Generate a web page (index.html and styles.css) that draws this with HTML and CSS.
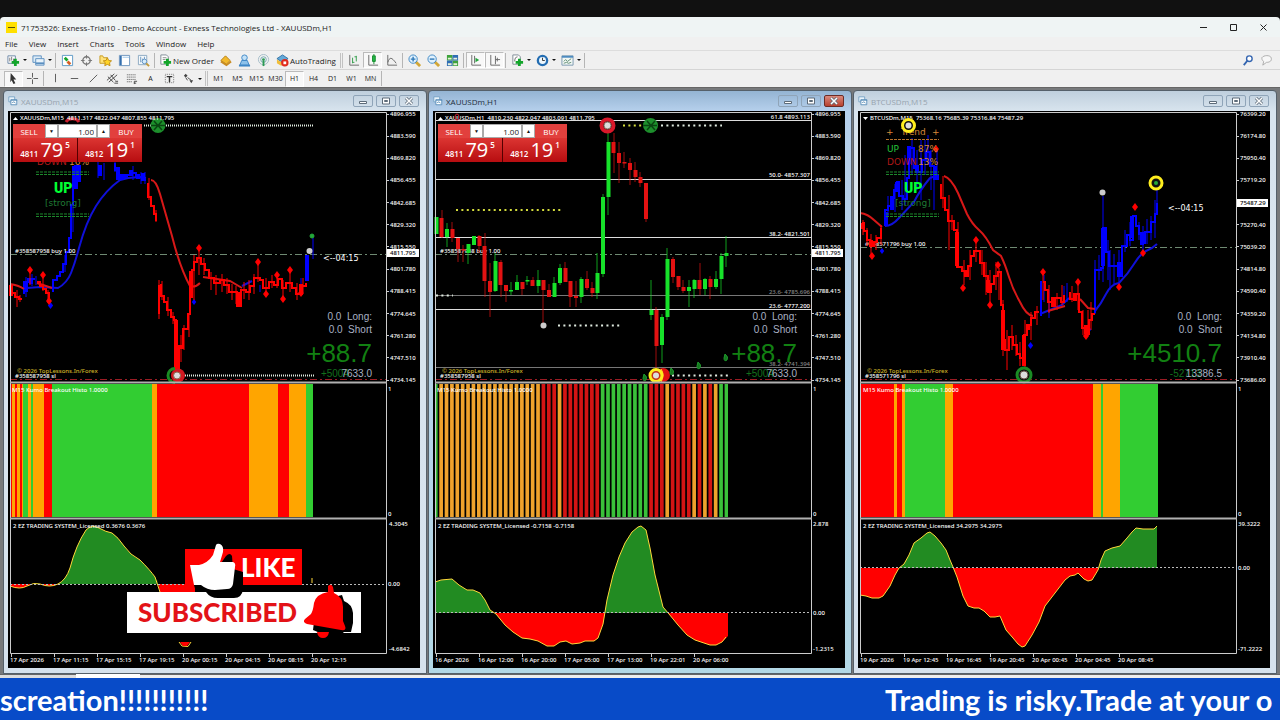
FILE: index.html
```html
<!DOCTYPE html>
<html lang="en">
<head>
    <meta charset="UTF-8">
    <meta name="viewport" content="width=device-width, initial-scale=1.0">
    <title>71753526: Exness-Trial10 - Demo Account</title>
    <link rel="stylesheet" href="styles.css">
</head>
<body>
    <svg class="defs" width="0" height="0" aria-hidden="true">
        <symbol id="i-win" viewBox="0 0 12 12"><path d="M1 1h7v6H1z" fill="#e9f4fb" stroke="#6d9cc0"/><path d="M3.500 4.500h7v6h-7z" fill="#fff" stroke="#4d86b4"/><path d="M3 5h8M5 8l2-1 2 1.500" stroke="#4d86b4" fill="none"/></symbol>
        <symbol id="i-min" viewBox="0 0 10 8"><path d="M1.500 4.500h7v2h-7z" fill="#fff" stroke="#5d6b79"/></symbol>
        <symbol id="i-max" viewBox="0 0 10 8"><path d="M1.500 1h7v6h-7z" fill="#fff" stroke="#5d6b79"/><path d="M3.500 3.500h3v1h-3z" fill="none" stroke="#5d6b79"/></symbol>
        <symbol id="i-x" viewBox="0 0 10 8"><path d="M2 1l6 6M8 1L2 7" stroke="#5d6b79" stroke-width="3"/><path d="M2 1l6 6M8 1L2 7" stroke="#fff" stroke-width="1.500"/></symbol>
        <symbol id="dia" viewBox="-4 -4 8 8"><path d="M0-4L3 0 0 4-3 0z"/></symbol>
    </svg>

    <div class="app">
        <header class="titlebar">
            <svg class="logo" viewBox="0 0 11 11"><path d="M0 0h11v11H0z" fill="#ffe000"/><path d="M2 5.500h7" stroke="#55500a"/></svg>
            <h1>71753526: Exness-Trial10 - Demo Account - Exness Technologies Ltd - XAUUSDm,H1</h1>
            <div class="sys">
                <button aria-label="Minimize"><svg viewBox="0 0 9 9"><path d="M1 4.500h7"/></svg></button>
                <button aria-label="Restore"><svg viewBox="0 0 9 9"><path d="M1.500 1.500h6v6h-6z"/></svg></button>
                <button aria-label="Close"><svg viewBox="0 0 9 9"><path d="M1.500 1.500l6 6M7.500 1.500l-6 6"/></svg></button>
            </div>
        </header>
        <nav class="menu">
            <a href="#">File</a><a href="#">View</a><a href="#">Insert</a><a href="#">Charts</a><a href="#">Tools</a><a href="#">Window</a><a href="#">Help</a>
        </nav>

        <div class="toolbar main-tools">
            <button class="drop" aria-label="New chart"><svg viewBox="0 0 14 14"><path d="M1 2h8v8H1z" fill="#fff" stroke="#6b86a5"/><path d="M3 8V4M5 7V3M7 8V5" stroke="#777"/><path d="M9 5v8M5 9h8" stroke="#13a52b" stroke-width="3"/></svg><i></i></button>
            <button class="drop" aria-label="Profiles"><svg viewBox="0 0 14 14"><path d="M1 2h9v7H1z" fill="#dcebf7" stroke="#5b8fc0"/><path d="M4 5h9v7H4z" fill="#e8f3fb" stroke="#5b8fc0"/><path d="M4 10h9" stroke="#5b8fc0" stroke-width="2"/></svg><i></i></button>
            <span class="sep"></span>
            <button aria-label="Market watch"><svg viewBox="0 0 14 14"><path d="M1.500 1.500h11v11h-11z" fill="#fff" stroke="#5b98c6"/><path d="M4 4l3 3" stroke="#13a52b" stroke-width="3"/><path d="M7 8l3 3" stroke="#d65f24" stroke-width="3"/></svg></button>
            <button aria-label="Data window"><svg viewBox="0 0 14 14"><circle cx="7" cy="7" r="4" fill="none" stroke="#777" stroke-width="1.500"/><path d="M7 1v4M7 9v4M1 7h4M9 7h4" stroke="#777"/></svg></button>
            <button aria-label="Navigator"><svg viewBox="0 0 14 14"><path d="M1 2h3l1 2h4v6H1z" fill="#ffe27a" stroke="#c79b1f"/><path d="M9 4l1.500 3 3 .4-2.200 2 .6 3.200L9 11.200 6.200 12.600l.6-3.200-2.200-2 3-.4z" fill="#ffd427" stroke="#c08d12"/></svg></button>
            <button aria-label="Terminal"><svg viewBox="0 0 14 14"><path d="M1.500 1.500h11v11h-11z" fill="#fff" stroke="#6b93bd"/><path d="M3 2v10" stroke="#356fae" stroke-width="2"/><path d="M5 3.500h7" stroke="#9bc4e8"/></svg></button>
            <button aria-label="Strategy tester"><svg viewBox="0 0 14 14"><path d="M1.500 1.500h9v10h-9z" fill="#f4f8fb" stroke="#8aa7c0"/><path d="M4 3v6M6 5v4M8 3v3" stroke="#6c97c0"/><circle cx="8" cy="8" r="2.500" fill="#d6ecfb" stroke="#5b8fc0"/><path d="M10 10l3 3" stroke="#c39b3a" stroke-width="2"/></svg></button>
            <span class="sep"></span>
            <button class="label"><svg viewBox="0 0 14 14"><path d="M2 1h6l2 2v8H2z" fill="#fff" stroke="#7d8994"/><path d="M4 4h4M4 6h3" stroke="#888"/><path d="M9 5v8M5 9h8" stroke="#13a52b" stroke-width="3"/></svg>New Order</button>
            <button aria-label="MetaEditor"><svg viewBox="0 0 14 14"><path d="M2 7l5-5 5 5-4 4z" fill="#f2b92c" stroke="#b3801a"/><path d="M2 8l6 4 5-4" fill="none" stroke="#c98c22" stroke-width="2"/></svg></button>
            <button aria-label="Community"><svg viewBox="0 0 14 14"><circle cx="7" cy="4" r="3" fill="#c3e1f7" stroke="#3c86c6"/><path d="M2 12l2-5h6l2 5z" fill="#8cc1ea" stroke="#3c86c6"/><path d="M1 12.500h12" stroke="#3c86c6" stroke-width="2"/></svg></button>
            <button aria-label="Signals"><svg viewBox="0 0 14 14"><circle cx="7" cy="6" r="5.500" fill="none" stroke="#a4bcc8"/><circle cx="7" cy="6" r="3" fill="none" stroke="#6fa7b0"/><circle cx="7" cy="6" r="1.500" fill="#2b9a53"/><path d="M7 7v6" stroke="#2b9a53" stroke-width="2"/></svg></button>
            <button class="label auto"><svg viewBox="0 0 14 14"><path d="M1 5l6-4 6 4-6 4z" fill="#64a9d8" stroke="#2f6fa5"/><path d="M1 6v4l5 3V9z" fill="#f0bd38"/><circle cx="9.500" cy="9.500" r="4" fill="#e02a1b"/><path d="M8 8h3v3H8z" fill="#fff"/></svg>AutoTrading</button>
            <span class="sep grip"></span>
            <button aria-label="Bar chart"><svg viewBox="0 0 14 14"><path d="M3 1v11h10" fill="none" stroke="#666"/><path d="M6 4v6M6 9h2M10 2v6M8 3h2" stroke="#2d9c46"/></svg></button>
            <button class="on" aria-label="Candlesticks"><svg viewBox="0 0 14 14"><path d="M3 1v11h10" fill="none" stroke="#666"/><path d="M8.500 0v11" stroke="#168c2e"/><path d="M7 2h3v6H7z" fill="#24b445" stroke="#168c2e"/></svg></button>
            <button aria-label="Line chart"><svg viewBox="0 0 14 14"><path d="M3 1v11h10" fill="none" stroke="#666"/><path d="M3 9c2-6 4-6 9 1" fill="none" stroke="#666"/></svg></button>
            <span class="sep"></span>
            <button aria-label="Zoom in"><svg viewBox="0 0 14 14"><path d="M8 8l5 5" stroke="#d2a737" stroke-width="3"/><circle cx="5.500" cy="5.500" r="4.500" fill="#dff1fd" stroke="#3d86c4"/><path d="M3 5.500h5M5.500 3v5" stroke="#2e78b8" stroke-width="1.500"/></svg></button>
            <button aria-label="Zoom out"><svg viewBox="0 0 14 14"><path d="M8 8l5 5" stroke="#d2a737" stroke-width="3"/><circle cx="5.500" cy="5.500" r="4.500" fill="#dff1fd" stroke="#3d86c4"/><path d="M3 5.500h5" stroke="#2e78b8" stroke-width="1.500"/></svg></button>
            <button aria-label="Tile windows"><svg viewBox="0 0 14 14"><path d="M1 1h6v6H1zM7 7h6v6H7z" fill="#3ea33c"/><path d="M7 1h6v6H7zM1 7h6v6H1z" fill="#2f6db4"/><path d="M2 4h4v2H2zM8 4h4v2H8zM2 10h4v2H2zM8 10h4v2H8z" fill="#e8f1da"/></svg></button>
            <span class="sep"></span>
            <button class="on" aria-label="Auto scroll"><svg viewBox="0 0 14 14"><path d="M3 1v11h10M6 2v8" fill="none" stroke="#666"/><path d="M7 4l4 2.500-4 2.500z" fill="#23a63b"/></svg></button>
            <button class="on" aria-label="Chart shift"><svg viewBox="0 0 14 14"><path d="M3 1v11h10M8 2v9" fill="none" stroke="#666"/><path d="M8 6h5M10 4v4" stroke="#666"/></svg></button>
            <span class="sep"></span>
            <button class="drop" aria-label="Indicators"><svg viewBox="0 0 14 14"><path d="M2 1h6l2 2v8H2z" fill="#fff" stroke="#7d8994"/><path d="M4 8c0-3 1-5 3-5" fill="none" stroke="#666"/><path d="M9 5v8M5 9h8" stroke="#13a52b" stroke-width="3"/></svg><i></i></button>
            <button class="drop" aria-label="Periods"><svg viewBox="0 0 14 14"><circle cx="7" cy="7" r="5" fill="#eef7fd" stroke="#236db2" stroke-width="2.500"/><path d="M7 4v3h2.500" fill="none" stroke="#333"/></svg><i></i></button>
            <button class="drop" aria-label="Templates"><svg viewBox="0 0 14 14"><path d="M1 2h12v10H1z" fill="#f2f7f4" stroke="#7796ae"/><path d="M1 3h12" stroke="#4d8bc0" stroke-width="2"/><path d="M3 8l2-2 2 2 4-3M3 10l3-1 2 1 3-1" fill="none" stroke="#5b8a70"/></svg><i></i></button>
            <span class="sep"></span>
            <button class="push" aria-label="Search"><svg viewBox="0 0 14 14"><circle cx="9" cy="5" r="3" fill="#fff" stroke="#3465b0" stroke-width="1.500"/><path d="M7 7l-4 5" stroke="#3465b0" stroke-width="2"/></svg></button>
            <button aria-label="Messages"><svg viewBox="0 0 14 14"><path d="M2 4c2-3 9-3 10 0s-1 5-5 5l-4 3 1-4c-2-1-2-3-2-4z" fill="#f7f7f7" stroke="#aaa"/></svg></button>
        </div>

        <div class="toolbar line-tools">
            <button class="on" aria-label="Cursor"><svg viewBox="0 0 14 14"><path d="M4 1l6 7H7l2 4-2 1-2-4-1.500 2z" fill="#333"/></svg></button>
            <button aria-label="Crosshair"><svg viewBox="0 0 14 14"><path d="M7 1v5M7 8v5M1 7h5M8 7h5" stroke="#555"/></svg></button>
            <span class="sep"></span>
            <button aria-label="Vertical line"><svg viewBox="0 0 14 14"><path d="M7 2v9" stroke="#555"/></svg></button>
            <button aria-label="Horizontal line"><svg viewBox="0 0 14 14"><path d="M3 7h8" stroke="#555"/></svg></button>
            <button aria-label="Trendline"><svg viewBox="0 0 14 14"><path d="M3 11l8-8" stroke="#555"/></svg></button>
            <button aria-label="Channel"><svg viewBox="0 0 14 14"><path d="M1 9l8-7M3 11l9-8M2 5l6 6M5 3l5 6M9 12h4M10 10h3" stroke="#444"/></svg></button>
            <button aria-label="Fibonacci"><svg viewBox="0 0 14 14"><path d="M2 3h10M2 5.500h10M2 8h10M2 10.500h6" stroke="#777" stroke-dasharray="1.500 .5"/><path d="M10 10v3M10 10h3M10 12h2" stroke="#444"/></svg></button>
            <button>A</button>
            <button aria-label="Text label"><svg viewBox="0 0 14 14"><path d="M2.500 2.500h9v9h-9z" fill="none" stroke="#777" stroke-dasharray="1 1"/><path d="M4 5h6M7 5v6" stroke="#333" stroke-width="1.500"/></svg></button>
            <button class="drop" aria-label="Arrows"><svg viewBox="0 0 14 14"><path d="M2 4l2-2 2 2-2 2zM8 9h4l-2 3z" fill="#444"/><path d="M4 6l2 3M6 6l4 3" stroke="#444"/></svg><i></i></button>
            <span class="sep grip"></span>
            <button>M1</button><button>M5</button><button>M15</button><button>M30</button><button class="on">H1</button><button>H4</button><button>D1</button><button>W1</button><button>MN</button>
            <span class="sep"></span>
        </div>

        <main class="workspace">
            <section class="win">
                <div class="caption">
                    <svg class="ico"><use href="#i-win"/></svg><h2>XAUUSDm,M15</h2>
                    <button aria-label="Minimize"><svg><use href="#i-min"/></svg></button><button aria-label="Maximize"><svg><use href="#i-max"/></svg></button><button aria-label="Close"><svg><use href="#i-x"/></svg></button>
                </div>
                <div class="chart">
                    <svg viewBox="8 111 412 557">
                        <defs><linearGradient id="g1" gradientUnits="userSpaceOnUse" x1="0" y1="520" x2="0" y2="648"><stop offset=".5" stop-color="#228b22"/><stop offset=".5" stop-color="#f00"/></linearGradient></defs>
                        <!-- price -->
                        <path class="level" d="M10 254.500H386"/>
                        <path class="sl" d="M10 379.500H386"/>
                        <g class="up">
                            <path class="ma" d="M27 288L40 287 58 288Q67 283 71 273T79 248Q86 222 96 206T120 180Q132 176 146 178M242 286L252 281"/>
                            <path class="body" d="M24 294V282H28V279H35M53 292V280H57V276H60V272H63V264H66V252H69V238H71V205H73V166M115 163V170H118V178H124V175H130V173H136V177H142V180H146"/>
                            <path class="fat" d="M26 281V292M31 279V284M76 165V189M79 165V182M100 165V176M118 167V180M122 174V180M126 174V178M131 170V176M138 174V179M143 173V181M307 281V255"/>
                            <path class="wick" d="M26 277V297M32 274V286M36 276V285M65 255V272M73 190V232M98 160V178M104 163V180M115 160V172M133 166V180M141 172V184M145 172V184M313 238V259M301 278V284M260 285V292"/>
                            <use href="#dia" x="47" y="302" width="7" height="7"/><use href="#dia" x="191" y="299" width="6" height="6"/>
                        </g>
                        <g class="down">
                            <path class="ma" d="M10 284Q18 285 24 289M37 283L52 288M151 180Q156 180 160 194L172 236Q180 268 190 286 195 288 200 283M203 277L230 281 242 288"/>
                            <path class="body" d="M12 285V293H15V297H19V299H22M37 282H40V286H43V289H46V293H49V300M148 183V197H151V206H154V214H156V221M159 285V314M161 284V296H164V302H167V310H171V317H174V320H176V372H179V346H183V329H188V314H190V290H192V270H194V262H197V258H201V264H205V270H209V278H214V283H220V280H224V285H229V292H237V306H241V290H246V292H250V286H254V278H260V280H263V288H269V282H274V285H278V279H282V288H286V283H292V288H296V294H302V286H306V283"/>
                            <path class="fat" d="M11 285V296M176 320V371M182 346V349M191 271V298M239 292V306M301 284V294"/>
                            <path class="wick" d="M17 290V307M20 295V302M30 272V285M43 276V291M48 290V303M149 178V200M156 210V222M159 280V319M162 281V300M168 297V316M173 312V324M181 335V362M184 325V350M189 315V337M194 255V300M199 250V275M204 258V275M211 272V290M216 275V295M222 274V292M227 278V294M232 284V300M236 286V304M244 282V299M249 280V300M254 274V294M258 263V282M266 278V294M272 275V288M277 275V288M283 280V299M290 271V292M297 283V300M303 278V292"/>
                            <use href="#dia" x="26" y="266" width="8" height="8"/><use href="#dia" x="39" y="271" width="8" height="8"/><use href="#dia" x="45" y="297" width="8" height="8"/><use href="#dia" x="195" y="244" width="8" height="8"/><use href="#dia" x="254" y="258" width="8" height="8"/><use href="#dia" x="262" y="290" width="8" height="8"/><use href="#dia" x="273" y="271" width="8" height="8"/><use href="#dia" x="279" y="295" width="8" height="8"/><use href="#dia" x="286" y="266" width="8" height="8"/><use href="#dia" x="297" y="289" width="8" height="8"/>
                        </g>
                        <path class="dots" d="M144 125.500H314M185 375.500H314"/>
                        <path d="M66 122a7 5 0 0 1 13 0" fill="none" stroke="#c81e2c" stroke-width="3"/>
                        <circle cx="158" cy="125.500" r="7.500" fill="#1d8f2c"/><path d="M154 121l8 9M162 121l-8 9M151 125.500h14" stroke="#0a4512" stroke-width="1.500"/>
                        <circle cx="312" cy="236" r="2" fill="#24a83a" stroke="#24a83a"/><circle cx="309.500" cy="251" r="3" fill="#ccc"/>
                        <circle cx="178" cy="375.500" r="7" fill="#d21920"/><path d="M175 368.500a7 7 0 0 0 0 14" fill="none" stroke="#1a8c24" stroke-width="3"/><circle cx="177" cy="375.500" r="3.500" fill="#ddd" stroke="#8a6a50"/>
                        <text x="20" y="120">XAUUSDm,M15&#160; 4811.317 4822.047 4807.855 4811.795</text>
                        <path d="M13 120h5l-2.500-3z" fill="#fff"/>
                        <text x="15" y="253">#358587958 buy 1.00</text>
                        <text class="gold" x="17" y="373">© 2026 TopLessons.In/Forex</text>
                        <text x="15" y="378">#358587958 sl</text>
                        <text class="trend red" x="37" y="165">DOWN</text><text class="trend orange" x="69" y="165">16%</text>
                        <path class="dash green" d="M36 172H89M36 174.500H89M36 214H89M36 216.500H89"/>
                        <text class="big-up" x="54" y="193">UP</text>
                        <text class="trend strong" x="45" y="206">[strong]</text>
                        <text class="clock" x="323" y="261">&lt;--04:15</text>
                        <g class="pnl"><text x="372" y="320">0.0&#160; Long:</text><text x="372" y="333">0.0&#160; Short</text><text class="profit" x="372" y="362">+88.7</text><text class="sub" x="349" y="377">+5004</text><text x="372" y="377">7633.0</text></g>
                        <!-- kumo histogram -->
                        <path d="M10 384H313V517H10z" fill="#f00"/>
                        <path d="M12 384h3v133h-3zM17 384h3v133h-3zM22 384h30v133h-30zM152 384h5v133h-5zM249 384h29v133h-29zM289 384h17v133h-17z" fill="#ffa500"/>
                        <path d="M44 384h8v133h-8z" fill="#f00"/>
                        <path d="M23 384h5v133h-5zM31 384h2v133h-2zM52 384h100v133H52zM306 384h7v133h-7z" fill="#32cd32"/>
                        <text x="12" y="392">M15 Kumo Breakout Histo 1.0000</text>
                        <!-- oscillator -->
                        <path class="osc" fill="url(#g1)" d="M10 584V586Q20 590 27 586T40 584Q50 588 58 584T70 568Q76 545 86 530 92 524 99 528T112 533Q118 537 124 546T140 560Q150 570 155 577L158 584H195V592H160L157 580V584z"/>
                        <path class="signal" d="M10 586Q20 590 27 586T40 584Q50 588 58 584T70 568Q76 545 86 530 92 524 99 528T112 533Q118 537 124 546T140 560Q150 570 155 577L160 592M179 642L182 646 188 646.500 191 642M312 578V583"/>
                        <path d="M180 642h10l-3 4h-4z" fill="#f00"/>
                        <path class="zero" d="M10 584.500H386"/>
                        <text x="13" y="528">2 EZ TRADING SYSTEM_Licensed 0.3676 0.3676</text>
                        <!-- frame and axes -->
                        <path class="frame" d="M10.500 653.500V112.500H386.500V653.500z"/>
                        <path class="split" d="M10 382.500H387M10 518.500H387"/>
                        <path class="frame" d="M387 114.500h2M387 136.500h2M387 158.500h2M387 180.500h2M387 202.500h2M387 224.500h2M387 246.500h2M387 269.500h2M387 291.500h2M387 313.500h2M387 335.500h2M387 357.500h2M387 380.500h2M11.500 653v4M54.500 653v4M97.500 653v4M140.500 653v4M183.500 653v4M226.500 653v4M269.500 653v4M312.500 653v4"/>
                        <g class="axis"><text x="390" y="116">4896.955</text><text x="390" y="138">4883.590</text><text x="390" y="160">4869.820</text><text x="390" y="182">4856.455</text><text x="390" y="205">4842.685</text><text x="390" y="227">4829.320</text><text x="390" y="249">4815.550</text><text x="390" y="271">4801.780</text><text x="390" y="293">4788.415</text><text x="390" y="316">4774.645</text><text x="390" y="338">4761.280</text><text x="390" y="360">4747.510</text><text x="390" y="382">4734.145</text><text x="388" y="391">1</text><text x="388" y="516">0</text><text x="389" y="526">4.3045</text><text x="388" y="586">0.00</text><text x="389" y="651">-4.6842</text></g>
                        <path d="M387 249h32v8h-32z" fill="#fff"/><text class="tag" x="390" y="255">4811.795</text>
                        <g class="axis"><text x="10" y="662">17 Apr 2026</text><text x="53" y="662">17 Apr 11:15</text><text x="96" y="662">17 Apr 15:15</text><text x="139" y="662">17 Apr 19:15</text><text x="182" y="662">20 Apr 00:15</text><text x="225" y="662">20 Apr 04:15</text><text x="268" y="662">20 Apr 08:15</text><text x="311" y="662">20 Apr 12:15</text></g>
                    </svg>
                    <div class="oneclick">
                        <div class="lots"><button>SELL</button><button class="spin" aria-label="Less">▼</button><input type="text" value="1.00" aria-label="Volume"><button class="spin" aria-label="More">▲</button><button>BUY</button></div>
                        <div class="prices"><button>4811<b>79</b><sup>5</sup></button><button>4812<b>19</b><sup>1</sup></button></div>
                    </div>
                </div>
            </section>

            <section class="win active">
                <div class="caption">
                    <svg class="ico"><use href="#i-win"/></svg><h2>XAUUSDm,H1</h2>
                    <button aria-label="Minimize"><svg><use href="#i-min"/></svg></button><button aria-label="Maximize"><svg><use href="#i-max"/></svg></button><button class="close" aria-label="Close"><svg><use href="#i-x"/></svg></button>
                </div>
                <div class="chart">
                    <svg viewBox="433 111 412 557">
                        <defs><linearGradient id="g2" gradientUnits="userSpaceOnUse" x1="0" y1="513" x2="0" y2="713"><stop offset=".5" stop-color="#228b22"/><stop offset=".5" stop-color="#f00"/></linearGradient></defs>
                        <!-- price -->
                        <path class="fib" d="M435 120.500H811M435 179.500H811M435 237.500H811M435 309.500H811"/>
                        <path class="fib dim" d="M435 295.500H811M435 367.500H811"/>
                        <path class="level" d="M435 254.500H811"/>
                        <path class="sl" d="M435 379.500H811"/>
                        <path class="dots wide" d="M558 325.500H620M661 125.500H722M436 295.500H453M672 375.500H728"/>
                        <path class="dots wide yellow" d="M456 210H561M623 125.500H650"/>
                        <text x="445" y="120">XAUUSDm,H1&#160; 4810.230 4822.047 4803.091 4811.795</text>
                        <path d="M438 120h5l-2.500-3z" fill="#fff"/>
                        <text x="440" y="253">#358587958 buy 1.00</text>
                        <text class="gold" x="442" y="373">© 2026 TopLessons.In/Forex</text>
                        <text x="440" y="378">#358587958 sl</text>
                        <g class="candle bull">
                            <path class="wick" d="M447 223V247M468 244V264M495 253V292M511 282V295M517 275V290M527 276V285M538 270V293M554 277V297M560 264V285M581 277V303M597 253V299M603 194V277M608 133V215M651 280V320M662 314V363M667 248V320M689 280V307M694 279V298M705 278V295M716 271V289M721 253V294M726 236V267"/>
                            <path class="body" d="M436.500 217V234M447 229V237M468.500 244V253M474 236V245M495.500 261V291M511 290V291.500M517 282V290M527.500 280V281.500M538.500 280V286M554.500 283V297M560 268V283M581.500 279V297M597.500 273V293M603 197V274M608.500 142V197M651.500 310V315M662 317V345M667.500 259V317M689 287V291M694.500 280V289M705 279V289M716 279V287M721.500 256V279M726.500 253V256"/>
                        </g>
                        <g class="candle bear">
                            <path class="wick" d="M442 210V238M452 222V242M458 238V262M463 245V262M479 235V253M485 233V297M490 263V317M501 260V297M506 285V302M522 282V295M533 277V286M543 280V323M549 284V297M565 262V282M570 281V307M576 281V307M587 271V290M592 282V297M614 133V173M619 142V183M624 152V168M630 158V185M635 162V182M640 172V187M646 183V222M656 307V370M673 257V283M678 276V290M683 280V293M700 263V295M710 276V299"/>
                            <path class="body" d="M441.500 218V237M452.500 229V238M458 238V249M463.500 249V250.500M479.500 236V246M484.500 246V281M490 281V292M500.500 262V285M506 285V291M522.500 282V289M532.500 280V286M543.500 280V290M549 290V297M565.500 268V282M570.500 281V297M576 296V298M587 279V288M592.500 288V293M613.500 142V153M619 153V163M624.500 162V163.500M630 163V170M635.500 170V177M640.500 177V183M646 183V219M656.500 310V346M673 259V277M678.500 276V287M683.500 287V291M699.500 280V289M710.500 279V287"/>
                        </g>
                        <circle cx="607.500" cy="125.500" r="6" fill="#111" stroke="#d9182a" stroke-width="4"/><circle cx="607.500" cy="125.500" r="3.500" fill="#ddd" stroke="#876"/>
                        <circle cx="650.500" cy="125.500" r="7.500" fill="#1d8f2c"/><path d="M647 121l8 9M655 121l-8 9M643 125.500h14" stroke="#0a4512" stroke-width="1.500"/>
                        <ellipse cx="457" cy="117" rx="2" ry="3" fill="none" stroke="#c81e2c"/>
                        <circle cx="543.500" cy="325.500" r="3" fill="#ccc"/>
                        <circle cx="663" cy="375" r="7" fill="#e01212"/><circle cx="656" cy="375.500" r="6" fill="#c4301a" stroke="#ffee1e" stroke-width="3"/><path d="M661 369q4 6 0 13" fill="none" stroke="#ffee1e"/><circle cx="656" cy="375.500" r="3" fill="#ddd"/>
                        <g fill="#14761f" stroke="#1f9a2c"><path d="M644 374q4 3 2 6-3 2-3-2zM671 368q4 3 2 6-3 2-3-2zM698 362q4 3 2 6-3 2-3-2zM725 354q4 3 2 6-3 2-3-2z"/></g>
                        <g class="fiblab"><text x="810" y="119">61.8 4893.113</text><text x="810" y="177">50.0- 4857.307</text><text x="810" y="236">38.2- 4821.501</text><text class="dim" x="810" y="294">23.6- 4785.696</text><text x="810" y="308">23.6- 4777.200</text><text class="dim" x="810" y="366">38.2- 4741.394</text></g>
                        <g class="pnl"><text x="797" y="320">0.0&#160; Long:</text><text x="797" y="333">0.0&#160; Short</text><text class="profit" x="797" y="362">+88.7</text><text class="sub" x="774" y="377">+5004</text><text x="797" y="377">7633.0</text></g>
                        <!-- kumo histogram: colour runs, then the gaps between bars -->
                        <path d="M435 384H439V517H435zM600 384h49v133h-49zM719 384h9v133h-9z" fill="#3ac13a"/>
                        <path d="M439 384h102v133H439zM557 384h6v133h-6zM665 384h5v133h-5zM692 384h5v133h-5zM703 384h5v133h-5zM713 384h6v133h-6z" fill="#efa22c"/>
                        <path d="M541 384h16v133h-16zM563 384h37v133h-37zM649 384h16v133h-16zM670 384h22v133h-22zM697 384h6v133h-6zM708 384h5v133h-5z" fill="#d41414"/>
                        <path d="M437.600 450.500H730" stroke="#000" stroke-width="133" stroke-dasharray="1.700 3.683"/>
                        <text x="437" y="392">M15 Kumo Breakout Histo 1.0000</text>
                        <!-- oscillator -->
                        <path class="osc" fill="url(#g2)" d="M435 613V582L441 580 452 579 459 585 467 590 473 590 480 593 485 600 490 610 496 614 505 625 513 632 522 638 530 639 538 641 547 646 554 646 560 642 566 641 572 644 580 643 585 641 594 641 598 638 603 624 607 600 613 575 619 557 625 543 632 532 638 527 641 526 646 530 650 548 655 575 660 595 663 607 669 614 678 625 687 635 695 640 710 645 716 645 722 642 728 636V613z"/>
                        <path class="signal" d="M435 582L441 580 452 579 459 585 467 590 473 590 480 593 485 600 490 610 496 614 505 625 513 632 522 638 530 639 538 641 547 646 554 646 560 642 566 641 572 644 580 643 585 641 594 641 598 638 603 624 607 600 613 575 619 557 625 543 632 532 638 527 641 526 646 530 650 548 655 575 660 595 663 607 669 614 678 625 687 635 695 640 710 645 716 645 722 642 726 637"/>
                        <path class="zero" d="M435 612.500H811"/>
                        <text x="438" y="528">2 EZ TRADING SYSTEM_Licensed -0.7158 -0.7158</text>
                        <!-- frame and axes -->
                        <path class="frame" d="M435.500 653.500V112.500H811.500V653.500z"/>
                        <path class="split" d="M435 382.500H812M435 518.500H812"/>
                        <path class="frame" d="M812 114.500h2M812 136.500h2M812 158.500h2M812 180.500h2M812 202.500h2M812 224.500h2M812 246.500h2M812 269.500h2M812 291.500h2M812 313.500h2M812 335.500h2M812 357.500h2M812 380.500h2M436.500 653v4M479.500 653v4M522.500 653v4M565.500 653v4M608.500 653v4M651.500 653v4M694.500 653v4"/>
                        <g class="axis"><text x="815" y="116">4896.955</text><text x="815" y="138">4883.590</text><text x="815" y="160">4869.820</text><text x="815" y="182">4856.455</text><text x="815" y="205">4842.685</text><text x="815" y="227">4829.320</text><text x="815" y="249">4815.550</text><text x="815" y="271">4801.780</text><text x="815" y="293">4788.415</text><text x="815" y="316">4774.645</text><text x="815" y="338">4761.280</text><text x="815" y="360">4747.510</text><text x="815" y="382">4734.145</text><text x="813" y="391">1</text><text x="813" y="516">0</text><text x="813" y="526">2.878</text><text x="813" y="615">0.00</text><text x="813" y="651">-1.2315</text></g>
                        <path d="M812 249h31v8h-31z" fill="#fff"/><text class="tag" x="815" y="255">4811.795</text>
                        <g class="axis"><text x="435" y="662">16 Apr 2026</text><text x="478" y="662">16 Apr 12:00</text><text x="521" y="662">16 Apr 20:00</text><text x="564" y="662">17 Apr 05:00</text><text x="607" y="662">17 Apr 13:00</text><text x="650" y="662">19 Apr 22:01</text><text x="693" y="662">20 Apr 06:00</text></g>
                    </svg>
                    <div class="oneclick">
                        <div class="lots"><button>SELL</button><button class="spin" aria-label="Less">▼</button><input type="text" value="1.00" aria-label="Volume"><button class="spin" aria-label="More">▲</button><button>BUY</button></div>
                        <div class="prices"><button>4811<b>79</b><sup>5</sup></button><button>4812<b>19</b><sup>1</sup></button></div>
                    </div>
                </div>
            </section>

            <section class="win">
                <div class="caption">
                    <svg class="ico"><use href="#i-win"/></svg><h2>BTCUSDm,M15</h2>
                    <button aria-label="Minimize"><svg><use href="#i-min"/></svg></button><button aria-label="Maximize"><svg><use href="#i-max"/></svg></button><button aria-label="Close"><svg><use href="#i-x"/></svg></button>
                </div>
                <div class="chart">
                    <svg viewBox="858 111 412 557">
                        <defs><linearGradient id="g3" gradientUnits="userSpaceOnUse" x1="0" y1="468" x2="0" y2="668"><stop offset=".5" stop-color="#228b22"/><stop offset=".5" stop-color="#f00"/></linearGradient></defs>
                        <!-- price -->
                        <path class="level" d="M860 247.500H1236"/>
                        <path class="sl" d="M860 379.500H1236"/>
                        <text x="870" y="120">BTCUSDm,M15&#160; 75368.16 75685.39 75316.84 75487.29</text>
                        <path d="M863 117h5l-2.500 3z" fill="#fff"/>
                        <text x="865" y="246">#358571796 buy 1.00</text>
                        <text class="gold" x="867" y="373">© 2026 TopLessons.In/Forex</text>
                        <text x="865" y="378">#358571796 sl</text>
                        <text class="trend orange" x="886" y="135">+</text><text class="trend orange" x="901" y="135">Trend</text><text class="trend orange" x="932" y="135">+</text>
                        <g class="up">
                            <path class="ma" d="M885 226Q892 226 899 218L914 202Q920 190 930 178L938 175M1040 314L1062 305 1069 298M1095 311Q1101 304 1106 294T1119 283Q1128 274 1134 264T1146 251Q1153 248 1157 244"/>
                            <path class="body" d="M885 226V210H888V206H891V198H894V190H897V182H899V196H903V199H907V178H909V148H914V168H918V172H922V160H926V152H930V166H934V176H938V180M1041 316V281M1095 313V270H1101V268H1103V228H1106V252H1109V266H1118V276H1122V246H1127V235H1130V240H1133V216H1136V226H1139V234H1142V243H1145V232H1151V222H1155V214H1157V203"/>
                            <path class="fat" d="M886 212V226M892 196V210M897 182V192M909 146V164M917 165V173M935 166V180M1103 228V266M1119 262V275M1132 216V238M1142 232V245"/>
                            <path class="wick" d="M888 196V216M895 184V212M902 180V210M905 155V205M912 138V175M917 150V190M921 140V200M925 140V175M928 135V165M931 150V190M934 170V210M937 150V178M1044 275V302M1049 290V318M1064 286V300M1067 283V302M1095 260V314M1099 255V280M1103 196V282M1108 240V280M1110 250V290M1114 254V284M1119 250V286M1125 230V252M1130 222V246M1139 222V240M1143 226V250M1147 219V244M1151 216V240M1155 200V238M1157 183V204"/>
                            <use href="#dia" x="879" y="248" width="6" height="6"/><use href="#dia" x="1027" y="342" width="7" height="7"/><use href="#dia" x="1086" y="326" width="6" height="7"/>
                        </g>
                        <g class="down">
                            <path class="ma" d="M860 213Q868 214 874 220L882 227M944 176Q951 178 958 193L967 214Q972 224 979 230T993 250L1001 256Q1005 264 1009 277T1020 302Q1026 315 1033 316M1048 311L1065 306M1080 299L1088 308 1095 309"/>
                            <path class="body" d="M862 223H864V231H867V240H870V246H874V242H877V238H881V228M941 184V198H945V210H948V221H954V230H957V267H962V271H966V276H968V266H971V256H974V251H980V263H984V276H988V292H991V284H994V276H998V272H1001V305H1003V340H1005V350H1009V337H1013V345H1017V354H1020V358H1024V335H1027V325H1031V318H1035V312H1039M1043 282H1045V290H1048V302H1052V306H1055V298H1061V302H1064V295M1070 292V299H1074V294H1079V312H1082V328H1086V334H1089V320H1092V314H1095"/>
                            <path class="fat" d="M862 223V229M871 240V247M957 232V266M966 270V277M988 280V292M1003 310V350M1024 335V366M1028 324V330M1053 297V306M1075 294V301M1086 325V334"/>
                            <path class="wick" d="M863 220V235M867 228V246M871 234V257M876 235V250M881 225V245M943 176V208M949 195V250M952 215V230M958 222V268M964 260V285M970 250V280M976 242V262M982 250V275M986 262V295M990 270V304M996 262V290M999 268V300M1003 300V356M1007 330V370M1012 325V350M1016 335V356M1020 342V366M1025 320V372M1031 312V340M1037 306V325M1043 272V300M1049 285V313M1057 293V310M1062 285V305M1072 286V302M1078 284V310M1083 310V335M1088 310V336M1091 302V330"/>
                            <use href="#dia" x="868" y="252" width="8" height="8"/><use href="#dia" x="932" y="145" width="8" height="8"/><use href="#dia" x="959" y="284" width="8" height="8"/><use href="#dia" x="972" y="236" width="8" height="8"/><use href="#dia" x="986" y="301" width="8" height="8"/><use href="#dia" x="994" y="261" width="8" height="8"/><use href="#dia" x="1039" y="268" width="8" height="8"/><use href="#dia" x="1074" y="278" width="8" height="8"/><use href="#dia" x="1082" y="332" width="8" height="8"/><use href="#dia" x="1131" y="203" width="8" height="8"/><use href="#dia" x="1115" y="283" width="8" height="8"/><use href="#dia" x="1139" y="249" width="8" height="8"/>
                        </g>
                        <circle cx="908.500" cy="125.500" r="6" fill="#111" stroke="#ffee1e" stroke-width="3"/><circle cx="908.500" cy="125.500" r="3" fill="#ddd"/>
                        <circle cx="1156" cy="183" r="6" fill="#111" stroke="#ffee1e" stroke-width="3"/><circle cx="1156" cy="183" r="2" fill="#24a83a"/>
                        <circle cx="1024" cy="375" r="7" fill="#111" stroke="#1a8c24" stroke-width="3"/><circle cx="1024" cy="375" r="4" fill="#ddd" stroke="#654"/>
                        <circle cx="1102.500" cy="192.500" r="3" fill="#ccc"/>
                        <path class="dash orange" d="M886 139.500H939"/>
                        <text class="trend lime" x="887" y="152">UP</text><text class="trend orange" x="918" y="152">87%</text>
                        <text class="trend red" x="887" y="165">DOWN</text><text class="trend orange" x="918" y="165">13%</text>
                        <path class="dash green" d="M886 172H939M886 174.500H939M886 214H939M886 216.500H939"/>
                        <text class="big-up" x="904" y="193">UP</text>
                        <text class="trend strong" x="895" y="206">[strong]</text>
                        <text class="clock" x="1168" y="211">&lt;--04:15</text>
                        <g class="pnl"><text x="1222" y="320">0.0&#160; Long:</text><text x="1222" y="333">0.0&#160; Short</text><text class="profit" x="1222" y="362">+4510.7</text><text class="sub" x="1201" y="377">-52713</text><text x="1222" y="377">13386.5</text></g>
                        <!-- kumo histogram -->
                        <path d="M860 384h298v133H860z" fill="#f00"/>
                        <path d="M894 384h3v133h-3zM902 384h3v133h-3zM945 384h8v133h-8zM1093 384h27v133h-27z" fill="#ffa500"/>
                        <path d="M905 384h40v133h-40zM1101 384h2v133h-2zM1120 384h38v133h-38z" fill="#32cd32"/>
                        <text x="863" y="392">M15 Kumo Breakout Histo 1.0000</text>
                        <!-- oscillator -->
                        <path class="osc" fill="url(#g3)" d="M860 568V595L866 596 872 598 879 598 883 596 890 586 895 575 899 568 904 564 909 555 914 543 921 538 927 533 930 532 935 536 941 543 946 550 950 560 953 567 957 577 963 596 968 606 974 608 979 608 984 611 990 617 995 617 1000 616 1006 630 1013 638 1018 644 1022 647 1025 646 1032 635 1039 622 1045 606 1055 593 1065 580 1070 576 1075 575 1078 573 1084 579 1088 581 1092 580 1098 570 1101 560 1105 551 1112 548 1120 546 1127 538 1132 532 1136 528 1143 529 1154 529 1157 526V568z"/>
                        <path class="signal" d="M860 595L866 596 872 598 879 598 883 596 890 586 895 575 899 568 904 564 909 555 914 543 921 538 927 533 930 532 935 536 941 543 946 550 950 560 953 567 957 577 963 596 968 606 974 608 979 608 984 611 990 617 995 617 1000 616 1006 630 1013 638 1018 644 1022 647 1025 646 1032 635 1039 622 1045 606 1055 593 1065 580 1070 576 1075 575 1078 573 1084 579 1088 581 1092 580 1098 570 1101 560 1105 551 1112 548 1120 546 1127 538 1132 532 1136 528 1143 529 1154 529 1157 526"/>
                        <path class="zero" d="M860 567.500H1236"/>
                        <text x="863" y="528">2 EZ TRADING SYSTEM_Licensed 34.2975 34.2975</text>
                        <!-- frame and axes -->
                        <path class="frame" d="M860.500 653.500V112.500H1236.500V653.500z"/>
                        <path class="split" d="M860 382.500H1237M860 518.500H1237"/>
                        <path class="frame" d="M1237 114.500h2M1237 136.500h2M1237 158.500h2M1237 180.500h2M1237 202.500h2M1237 224.500h2M1237 246.500h2M1237 269.500h2M1237 291.500h2M1237 313.500h2M1237 335.500h2M1237 357.500h2M1237 380.500h2M861.500 653v4M904.500 653v4M947.500 653v4M990.500 653v4M1033.500 653v4M1076.500 653v4M1119.500 653v4"/>
                        <g class="axis"><text x="1240" y="116">76399.20</text><text x="1240" y="138">76174.80</text><text x="1240" y="160">75950.40</text><text x="1240" y="182">75719.20</text><text x="1240" y="227">75270.40</text><text x="1240" y="249">75039.20</text><text x="1240" y="271">74814.80</text><text x="1240" y="293">74590.40</text><text x="1240" y="316">74359.20</text><text x="1240" y="338">74134.80</text><text x="1240" y="360">73910.40</text><text x="1240" y="382">73686.00</text><text x="1238" y="391">1</text><text x="1238" y="516">0</text><text x="1238" y="526">39.3222</text><text x="1238" y="570">0.00</text><text x="1238" y="651">-71.2222</text></g>
                        <path d="M1237 199h31v8h-31z" fill="#fff"/><text class="tag" x="1240" y="205">75487.29</text>
                        <g class="axis"><text x="860" y="662">19 Apr 2026</text><text x="903" y="662">19 Apr 12:45</text><text x="946" y="662">19 Apr 16:45</text><text x="989" y="662">19 Apr 20:45</text><text x="1032" y="662">20 Apr 00:45</text><text x="1075" y="662">20 Apr 04:45</text><text x="1118" y="662">20 Apr 08:45</text></g>
                    </svg>
                </div>
            </section>
        </main>
        <div class="tabs"><span></span><span class="current"></span><span class="rest"></span></div>
        <footer class="ticker"><span>screation!!!!!!!!!!!</span><span>Trading is risky.Trade at your o</span></footer>
    </div>

    <div class="promo">
        <button class="like">LIKE</button>
        <button class="subscribed">SUBSCRIBED</button>
        <svg viewBox="127 542 234 100">
            <path d="M226 556q4-4 6 0l1 13 10 3v17q-1 9-9 9h-16q-8 0-12-6h-10l-2-7h12z" fill="#000"/>
            <path d="M190 565h9q9-2 14-10l3-10q1-2 4-1 4 2 3 8l-3 10h13q3 1 2 5l-2 17q-1 5-6 5l-12 1q-8 0-14-5h-7q-2-10-4-20z" fill="#fff"/>
            <path d="M338 596l4-1 2 6q8 3 9 12v10l-2 9h-7q-8 8-17 4l-14-6 1-8 25-20z" fill="#000"/>
            <g fill="#f00"><path d="M328 592v-6q3-3 5 1l1 6q9 4 9 14v14l2 5q2 5-4 4l-34-6q-5-2-2-5l6-5q2-3 3-11 2-9 14-11z"/><path d="M317 632h12q-1 6-6 6t-6-6z"/></g>
        </svg>
    </div>
</body>
</html>
```
FILE: styles.css
```css
* {
    box-sizing: border-box;
}
body {
    margin: 0;
    background: #111;
    font-family: "Open Sans", "Noto Sans", sans-serif;
    font-size: 8px;
    color: #222;
    overflow: hidden;
}
button, input {
    font: inherit;
    color: inherit;
    margin: 0;
    padding: 0;
    border: 0;
    background: none;
}
h1, h2 {
    margin: 0;
    font-size: 8px;
    font-weight: 400;
}
.defs {
    position: absolute;
}
.app {
    display: flex;
    flex-direction: column;
    min-height: 100vh;
    padding-top: 17px;
}

/* title and menu */
.titlebar {
    display: flex;
    align-items: center;
    height: 20px;
    padding: 0 12px 0 6px;
    gap: 4px;
    background: #eff4f4;
    border-radius: 4px 4px 0 0;
}
.logo {
    width: 11px;
    height: 11px;
}
.sys {
    display: flex;
    gap: 21px;
    margin-left: auto;
}
.sys button {
    display: flex;
}
.sys svg {
    width: 9px;
    height: 9px;
    fill: none;
    stroke: #222;
}
.menu {
    display: flex;
    align-items: center;
    gap: 11px;
    height: 14px;
    padding-left: 5px;
    background: #f0f0f0;
    border-bottom: 1px solid #ddd;
}
.menu a {
    color: #222;
    text-decoration: none;
}

/* toolbars */
.toolbar {
    display: flex;
    align-items: center;
    height: 19px;
    padding: 0 4px;
    background: #f0f0f0;
    border-bottom: 1px solid #d5d5d5;
}
.line-tools {
    height: 18px;
    border-bottom: 1px solid #666;
    font-size: 7px;
}
.toolbar button {
    display: flex;
    align-items: center;
    justify-content: center;
    width: 19px;
    height: 16px;
}
.toolbar svg {
    width: 13px;
    height: 13px;
    flex: none;
}
.toolbar .drop {
    width: 25px;
    gap: 3px;
}
.toolbar .drop i {
    border: 2px solid transparent;
    border-top-color: #111;
    border-bottom: 0;
}
.toolbar .on {
    background: #f8f8f8;
    border: 1px solid #bbb;
    border-right-color: #fff;
    border-bottom-color: #fff;
}
.toolbar .label {
    width: 59px;
    gap: 1px;
}
.toolbar .auto {
    width: 66px;
}
.toolbar .push {
    margin-left: auto;
}
.sep {
    width: 1px;
    height: 15px;
    margin: 0 2px 0 1px;
    background: #b5b5b5;
}
.sep.grip {
    width: 3px;
    margin: 0 1px;
    background: none;
    border: 1px solid #c2c2c2;
    border-width: 0 1px;
}

/* chart windows */
.workspace {
    flex: 1;
    display: grid;
    grid-template-columns: repeat(3, 1fr);
    align-items: start;
    gap: 1px;
    padding: 2px 3px 0;
    background: #77797b;
}
.win {
    padding: 0 6px 5px 4px;
    background: linear-gradient(#bfcfdd, #d8e4ee 20px, #d6e2ed);
    border: 1px solid #55606a;
    border-radius: 4px 4px 0 0;
    color: #97a3ae;
}
.win.active {
    background: linear-gradient(#94b4d3, #b6d0ec 20px, #b5cfe8 130px, #b3d8e6);
    color: #1d2d3d;
}
.caption {
    display: flex;
    align-items: center;
    gap: 3px;
    height: 20px;
    padding-right: 1px;
}
.caption .ico {
    width: 10px;
    height: 10px;
}
.caption h2 {
    margin-right: auto;
}
.caption button {
    display: flex;
    align-items: center;
    justify-content: center;
    width: 20px;
    height: 12px;
    border: 1px solid #8fa4b8;
    border-radius: 2px;
}
.caption button svg {
    width: 10px;
    height: 8px;
}
.caption .close {
    background: linear-gradient(#d98a7e, #b8402e);
    border-color: #6c2c26;
}
.chart {
    position: relative;
    background: #000;
}
.chart > svg {
    display: block;
    width: 100%;
    font-family: "Noto Sans", sans-serif;
    font-size: 6px;
    font-weight: 500;
    fill: #fff;
}
.frame, .split {
    fill: none;
    stroke: #ccc;
}
.split {
    stroke-width: 2px;
    stroke: #b0b0b0;
}
.level {
    stroke: #6f8a72;
    stroke-dasharray: 7 3 2 3;
}
.sl {
    stroke: #9c1c24;
    stroke-dasharray: 7 3 2 3;
}
.zero {
    stroke: #bbb;
    stroke-dasharray: 2 2;
}
.dots {
    stroke: #dfeadf;
    stroke-width: 2px;
    stroke-dasharray: 1 1;
}
.dots.wide {
    stroke-dasharray: 2 3.383;
}
.dots.yellow {
    stroke: #d3dc3c;
}
.up {
    fill: #00f;
    stroke: #00f;
}
.down {
    fill: #f00;
    stroke: #f00;
}
.up path, .down path {
    fill: none;
}
.up use, .down use {
    stroke: none;
}
#dia path {
    fill: inherit;
}
.up .ma {
    stroke: #1010d8;
    stroke-width: 2px;
}
.down .ma {
    stroke: #d81818;
    stroke-width: 2px;
}
.body {
    stroke-width: 2px;
}
.fat {
    stroke-width: 4px;
}
.wick {
    stroke-width: 1px;
}
.bull {
    stroke: #17e22a;
}
.bear {
    stroke: #e31212;
}
.candle .body {
    stroke-width: 4px;
}
.candle .wick {
    opacity: .7;
}
.fib {
    stroke: #ddd;
}
.fib.dim {
    stroke: #777;
}
.fiblab, .pnl {
    text-anchor: end;
}
.fiblab .dim {
    fill: #888;
}
.signal {
    fill: none;
    stroke: #ffd83a;
    stroke-width: 1px;
}
.gold {
    fill: #d0b428;
}
.tag {
    fill: #000;
}
.trend {
    font-family: "DejaVu Sans", sans-serif;
    font-size: 9px;
    font-weight: 400;
}
.orange {
    fill: #d8893a;
    stroke: none;
}
.red {
    fill: #b01818;
}
.lime {
    fill: #25c53a;
}
.strong {
    fill: #1f7a34;
}
.dash {
    stroke-dasharray: 3 1;
}
.dash.green {
    stroke: #1d8a2c;
}
.dash.orange {
    stroke: #b8722c;
}
.big-up {
    font-family: Roboto, sans-serif;
    font-size: 14px;
    font-weight: 900;
    fill: #0f3;
}
.clock {
    font-family: "DejaVu Sans", sans-serif;
    font-size: 8px;
    font-weight: 400;
}
.pnl {
    font-family: "Liberation Sans", Arial, sans-serif;
    font-size: 10px;
    font-weight: 400;
    fill: #a9b1c4;
}
.pnl .profit {
    font-size: 26px;
    fill: #128012;
}
.pnl .sub {
    fill: #12701c;
}

/* one click trading */
.oneclick {
    position: absolute;
    left: 5px;
    top: 13px;
    width: 129px;
    color: #fff;
}
.lots, .prices {
    display: flex;
}
.lots {
    height: 14px;
    background: #c9302e;
}
.lots button {
    width: 32px;
    background: #e2403d;
}
.lots .spin {
    width: 13px;
    background: #fff;
    border: 1px solid #aaa;
    color: #111;
    font-size: 5px;
}
.lots input {
    flex: 1;
    min-width: 0;
    padding-right: 2px;
    text-align: right;
    color: #222;
    background: #fff;
    border: 1px solid #aaa;
}
.prices {
    gap: 1px;
    height: 24px;
    background: #500;
}
.prices button {
    flex: 1;
    display: flex;
    align-items: baseline;
    justify-content: center;
    gap: 2px;
    background: linear-gradient(#dc3532, #b70d10);
    font-weight: 600;
    line-height: 24px;
}
.prices b {
    font-size: 20px;
    font-weight: 400;
}
.prices sup {
    font-size: 8px;
    line-height: 8px;
    align-self: flex-start;
    padding-top: 3px;
}

/* bottom strip and ticker */
.tabs {
    display: flex;
    height: 4px;
    background: #eee;
}
.tabs span {
    width: 76px;
    border-top: 1px solid #666;
    background: #ddd;
}
.tabs .current {
    width: 64px;
    background: #fff;
    border-color: #fff;
}
.tabs .rest {
    flex: 1;
    background: #eee;
}
.ticker {
    display: grid;
    grid-template-columns: 885fr 395fr;
    align-items: center;
    height: 42px;
    background: #084bc8;
    color: #fff;
    font: 700 29px Lato, sans-serif;
    white-space: nowrap;
    overflow: hidden;
}
.ticker span {
    min-width: 0;
}

/* stream overlay */
.promo {
    position: absolute;
    left: 127px;
    top: 542px;
    width: 234px;
    height: 100px;
    font: 900 26px/34px Lato, sans-serif;
}
.promo button {
    position: absolute;
    text-align: left;
}
.promo .like {
    left: 58px;
    top: 7px;
    width: 117px;
    height: 36px;
    padding-left: 56px;
    background: #f00;
    color: #fff;
}
.promo .subscribed {
    left: 0;
    top: 50px;
    width: 234px;
    height: 41px;
    padding: 0 0 2px 11px;
    background: #fff;
    color: #e31217;
}
.promo svg {
    position: absolute;
    inset: 0;
}
```
